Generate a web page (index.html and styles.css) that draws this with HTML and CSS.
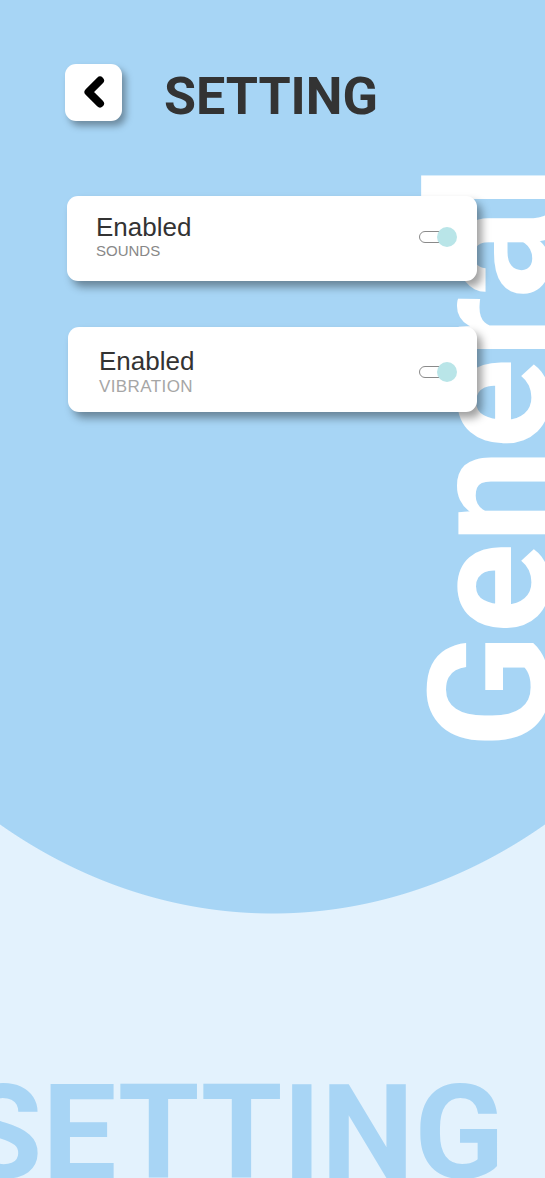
FILE: index.html
```html
<!DOCTYPE html>
<html lang="en">
<head>
<meta charset="utf-8">
<title>Setting</title>
<link rel="stylesheet" href="styles.css">
</head>
<body>
<div class="page">
  <div class="watermark-general">General</div>
  <header class="header">
    <button class="back" aria-label="Back">
      <svg class="back-icon" width="57" height="57" viewBox="0 0 57 57">
        <polyline points="35,16.5 23.5,28 35,39.5" fill="none" stroke="#000" stroke-width="8" stroke-linecap="round" stroke-linejoin="round"/>
      </svg>
    </button>
    <h1 class="title">SETTING</h1>
  </header>
  <main class="cards">
    <div class="card card--sounds">
      <div class="card-text">
        <div class="card-title">Enabled</div>
        <div class="card-label">SOUNDS</div>
      </div>
      <span class="toggle"><span class="toggle-track"></span><span class="toggle-knob"></span></span>
    </div>
    <div class="card card--vibration">
      <div class="card-text">
        <div class="card-title">Enabled</div>
        <div class="card-label card-label--light">VIBRATION</div>
      </div>
      <span class="toggle"><span class="toggle-track"></span><span class="toggle-knob"></span></span>
    </div>
  </main>
  <div class="watermark-setting">SETTING</div>
</div>
</body>
</html>
```

FILE: styles.css
```css
* { box-sizing: border-box; }
html, body { margin: 0; padding: 0; }
body {
  width: 545px;
  height: 1178px;
  overflow: hidden;
  background: #e3f2fd;
}
.page {
  position: relative;
  width: 545px;
  height: 1178px;
  overflow: hidden;
  background: radial-gradient(ellipse 545px 664px at 272.5px 250px, #a7d5f5 99.85%, #e3f2fd 100%);
  font-family: "Liberation Sans", Arial, sans-serif;
}
.watermark-general {
  position: absolute;
  left: 407px;
  top: 165px;
  writing-mode: vertical-rl;
  transform: rotate(180deg);
  font-family: Roboto, sans-serif;
  font-weight: 700;
  font-size: 168px;
  line-height: 168px;
  color: #ffffff;
  white-space: nowrap;
}
.watermark-setting {
  position: absolute;
  left: -39px;
  top: 1067px;
  font-family: Roboto, sans-serif;
  font-weight: 700;
  font-size: 132px;
  line-height: 132px;
  color: #a8d5f5;
  white-space: nowrap;
}
.header {
  position: relative;
  display: flex;
  align-items: flex-start;
  gap: 42px;
  padding: 64px 0 0 65px;
}
.back {
  width: 57px;
  height: 57px;
  padding: 0;
  border: none;
  border-radius: 11px;
  background: #fff;
  box-shadow: 4px 5px 7px rgba(0, 0, 0, 0.35);
  display: flex;
  align-items: center;
  justify-content: center;
}
.back-icon { display: block; }
.title {
  margin: 7px 0 0 0;
  font-family: Roboto, sans-serif;
  font-weight: 700;
  font-size: 52px;
  line-height: 52px;
  color: #333333;
}
.cards {
  position: relative;
  display: flex;
  flex-direction: column;
  gap: 46px;
  margin: 73px 0 0 67px;
  width: 410px;
}
.card {
  height: 85px;
  display: flex;
  align-items: center;
  justify-content: space-between;
  padding: 0 20px 4px 29px;
  background: #fff;
  border-radius: 11px;
  box-shadow: 5px 6px 8px rgba(0, 0, 0, 0.38);
}
.card--vibration {
  margin-left: 1px;
  padding: 4px 20px 0 31px;
}
.card-text {
  display: flex;
  flex-direction: column;
}
.card-title {
  font-size: 26px;
  line-height: 28px;
  color: #333333;
}
.card-label {
  margin-top: 1px;
  font-size: 15px;
  line-height: 18px;
  color: #888888;
}
.card-label--light {
  margin-top: 2px;
  font-size: 17px;
  line-height: 20px;
  letter-spacing: 0.4px;
  color: #a6a6a6;
}
.toggle {
  display: inline-flex;
  align-items: center;
}
.toggle-track {
  width: 27px;
  height: 12px;
  border: 1.5px solid #8a8a8a;
  border-radius: 6px;
  background: #fff;
}
.toggle-knob {
  width: 20px;
  height: 20px;
  margin-left: -9px;
  border-radius: 50%;
  background: #b9e5e8;
}
```
